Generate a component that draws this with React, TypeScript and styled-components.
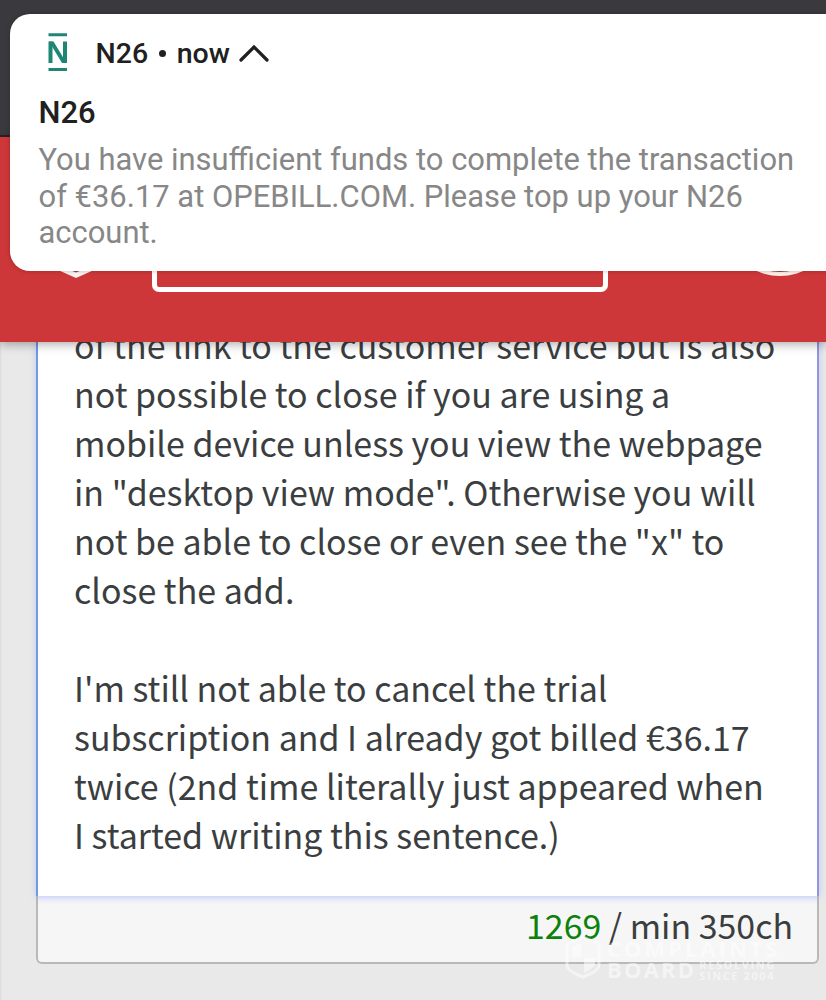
import React from "react";
import styled, { createGlobalStyle } from "styled-components";

const GlobalStyle = createGlobalStyle`
  * {
    box-sizing: border-box;
  }

  body {
    margin: 0;
    background: #e9e9e9;
    overflow: hidden;
  }
`;

const Screen = styled.div`
  position: relative;
  display: flex;
  flex-direction: column;
  width: 826px;
  height: 1000px;
  overflow: hidden;
  background: linear-gradient(90deg, #dedede 0, #dedede 1px, #e9e9e9 2px);
`;

const StatusBar = styled.div`
  flex: none;
  height: 137px;
  background: #3a393d;
  border-bottom: 2px solid #2c2224;
`;

const SiteHeader = styled.header`
  position: relative;
  z-index: 1;
  flex: none;
  display: flex;
  align-items: flex-end;
  height: 205px;
  padding: 0 4px 50px 56px;
  background: #cd3739;
  box-shadow: 0 2px 10px rgba(0, 0, 0, 0.35);
`;

const Shield = styled.svg`
  width: 40px;
  height: 40px;
  margin-bottom: 14px;
`;

const SearchBox = styled.div`
  width: 456px;
  height: 90px;
  margin-left: 56px;
  border: 5px solid #fff;
  border-radius: 7px;
`;

const Avatar = styled.div`
  width: 84px;
  height: 60px;
  margin: 0 0 16px auto;
  border: 4px solid #fff0e8;
  border-radius: 50%;
  background: #8a4a50;
`;

const Editor = styled.main`
  display: flex;
  flex-direction: column;
  width: 783px;
  height: 622px;
  margin-left: 36px;
  font-family: "Noto Sans CJK SC", "Noto Sans", sans-serif;
  color: #3b3e40;
`;

const TextArea = styled.div`
  height: 554px;
  padding-left: 36px;
  background: #fff;
  border-left: 2px solid #7098e4;
  border-right: 2px solid #9294e0;
  box-shadow: 0 0 7px rgba(110, 140, 250, 0.35);
  z-index: 0;
`;

const Lines = styled.div`
  margin-top: -22.5px;
`;

const Line = styled.div`
  height: 49px;
  font-size: 33.96px;
  line-height: 49px;
  white-space: pre;
`;

const Counter = styled.footer`
  height: 68px;
  padding-right: 24px;
  border: 2px solid #b9b9b9;
  border-top: 0;
  border-radius: 0 0 6px 6px;
  background: linear-gradient(#e6e6fa 0, #f1f2f7 5px, #f6f6f6 9px);
  font-size: 33.9px;
  line-height: 57px;
  text-align: right;
  white-space: pre;
`;

const Count = styled.span`
  color: #0b820b;
`;

const Notification = styled.section`
  position: absolute;
  z-index: 2;
  top: 14px;
  left: 9.5px;
  width: 840px;
  height: 256.5px;
  padding: 19px 29px;
  background: #fff;
  border-radius: 20px;
  box-shadow: 0 0 4px rgba(0, 0, 0, 0.25);
  font-family: Roboto, sans-serif;
`;

const AppRow = styled.div`
  display: flex;
  align-items: center;
  height: 40px;
  color: #202020;
  font-size: 28.5px;
  font-weight: 500;
  white-space: pre;
`;

const BankLogo = styled.svg`
  flex: none;
  width: 20px;
  height: 40px;
  margin: 0 28px 2px 9px;
`;

const Dot = styled.i`
  width: 7px;
  height: 7px;
  margin: 0 11px 0 10.5px;
  border-radius: 50%;
  background: #202020;
`;

const Chevron = styled.svg`
  width: 32px;
  height: 20px;
  margin-left: 8.5px;
`;

const Title = styled.h1`
  margin: 22px 0 0;
  font-size: 31px;
  line-height: 36px;
  font-weight: 500;
  color: #202020;
`;

const Message = styled.div`
  height: 36.5px;
  font-size: 30.95px;
  line-height: 36.5px;
  color: #878787;
  white-space: pre;
`;

const Messages = styled.div`
  margin-top: 11px;
`;

const Watermark = styled.div`
  position: absolute;
  z-index: 2;
  left: 564px;
  top: 934px;
  display: flex;
  gap: 5px;
  color: #fff;
  opacity: 0.5;
  font-family: "Open Sans", sans-serif;
  font-weight: 700;
`;

const Brand = styled.div`
  padding-top: 3.5px;
  font-size: 22px;
  line-height: 21px;
  letter-spacing: 3px;
`;

const BrandRow = styled.div`
  display: flex;
  letter-spacing: 2.2px;
`;

const Tagline = styled.div`
  margin-left: 3px;
  font-size: 11px;
  line-height: 11px;
  letter-spacing: 1.6px;
`;

const reviewLines = [
  "of the link to the customer service but is also",
  "not possible to close if you are using a",
  "mobile device unless you view the webpage",
  'in "desktop view mode". Otherwise you will',
  'not be able to close or even see the "x" to',
  "close the add.",
  "",
  "I'm still not able to cancel the trial",
  "subscription and I already got billed €36.17",
  "twice (2nd time literally just appeared when",
  "I started writing this sentence.)"
];

const messageLines = [
  "You have insufficient funds to complete the transaction",
  "of €36.17 at OPEBILL.COM. Please top up your N26",
  "account."
];

function PushNotification() {
  return (
    <Notification>
      <AppRow>
        <BankLogo viewBox="0 0 20 40" fill="none" stroke="#1f8676">
          <path d="M0.500 2.700h18.500M0.500 37.600h18.500" strokeWidth="3" />
          <path d="M2.500 31V9.500M17 31V9.500" strokeWidth="4" />
          <path d="M1 9.500h4.500L18.500 31h-4.500z" fill="#1f8676" stroke="none" />
        </BankLogo>
        N26
        <Dot />
        now
        <Chevron viewBox="0 0 32 20" fill="none" stroke="#202020" strokeWidth="3.2">
          <path d="M3 17L16 4l13 13" strokeLinecap="round" />
        </Chevron>
      </AppRow>
      <Title>N26</Title>
      <Messages>
        {messageLines.map(line => (
          <Message key={line}>{line}</Message>
        ))}
      </Messages>
    </Notification>
  );
}

function App() {
  return (
    <>
      <GlobalStyle />
      <Screen>
        <StatusBar />
        <SiteHeader>
          <Shield viewBox="0 0 40 40">
            <path d="M2 0h36v32L20 40 2 32z" fill="#fff3f2" />
            <path d="M8 0h24v29.500l-12 5-12-5z" fill="#8a4a50" />
          </Shield>
          <SearchBox />
          <Avatar />
        </SiteHeader>
        <Editor>
          <TextArea>
            <Lines>
              {reviewLines.map((line, i) => (
                <Line key={i}>{line}</Line>
              ))}
            </Lines>
          </TextArea>
          <Counter>
            <Count>1269</Count> / min 350ch
          </Counter>
        </Editor>
        <PushNotification />
        <Watermark>
          <svg width="38" height="46" viewBox="0 0 38 46" fill="none">
            <path d="M3 10L19 3l16 7v21q0 6-16 12Q3 37 3 31z" stroke="#fff" strokeWidth="3" />
            <path d="M8 13l9-4v14H8zM20 24h11v7q-3 4-11 8z" fill="#fff" />
          </svg>
          <Brand>
            COMPLAINTS
            <BrandRow>
              BOARD
              <Tagline>
                RESOLVING
                <br />
                SINCE 2004
              </Tagline>
            </BrandRow>
          </Brand>
        </Watermark>
      </Screen>
    </>
  );
}

export default App;
